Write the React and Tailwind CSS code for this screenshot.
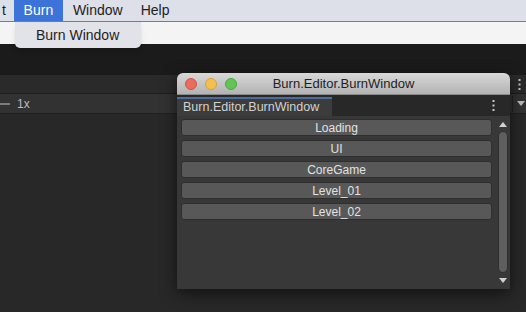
const Dots = ({ className = "" }) => (
  <svg width="3" height="11" viewBox="0 0 3 11" className={className}>
    <rect x="0.5" y="0" width="2" height="2" fill="currentColor" />
    <rect x="0.5" y="4.5" width="2" height="2" fill="currentColor" />
    <rect x="0.5" y="9" width="2" height="2" fill="currentColor" />
  </svg>
);

const scenes = ["Loading", "UI", "CoreGame", "Level_01", "Level_02"];

const App = () => {
  return (
    <div
      className="relative w-[526px] h-[312px] overflow-hidden flex flex-col bg-[#282828]"
      style={{ fontFamily: '"Liberation Sans", Arial, sans-serif' }}
    >
      {/* mac menu bar */}
      <div className="h-[22px] shrink-0 bg-[#dde0e9] border-b border-[#7a7d88] flex items-stretch text-[14px] text-[#1e1e1e]">
        <span className="pl-[2px] pr-[8px] flex items-center">t</span>
        <span className="w-[49px] bg-[#3b73d8] text-white flex items-center justify-center">Burn</span>
        <span className="pl-[10px] pr-[18px] flex items-center">Window</span>
        <span className="flex items-center">Help</span>
      </div>
      <div className="h-[22px] shrink-0 bg-[#f4f4f4]" />
      <div className="h-[31px] shrink-0 bg-[#1b1b1b]" />

      {/* unity panel behind */}
      <div className="h-[19px] shrink-0 bg-[#2a2a2a] border-b border-[#1d1d1d] flex items-center justify-end pr-[5px] text-[#c4c4c4]">
        <Dots />
      </div>
      <div className="h-[20px] shrink-0 bg-[#323232] border-b border-[#1f1f1f] flex items-center">
        <div className="w-[10px] h-[2px] bg-[#7c7c7c]" />
        <span className="ml-[7px] text-[12px] text-[#bdbdbd]">1x</span>
        <div className="ml-auto w-px h-[16px] bg-[#222]" />
        <svg width="8" height="5" viewBox="0 0 8 5" className="ml-[4px] mr-[1px] text-[#bbbbbb]">
          <path d="M0 0h8L4 5z" fill="currentColor" />
        </svg>
      </div>
      <div className="flex-1 bg-[#282828]" />

      {/* Burn menu dropdown */}
      <div className="absolute left-[15px] top-[22px] w-[126px] h-[26px] bg-[#e2e3e9] rounded-b-[5px] shadow-md flex items-center pl-[21px] text-[14px] text-[#1e1e1e]">
        Burn Window
      </div>

      {/* floating editor window */}
      <div className="absolute left-[177px] top-[73px] w-[333px] h-[216px] flex flex-col rounded-t-[6px] overflow-hidden shadow-[0_4px_16px_rgba(0,0,0,0.6)]">
        <div className="h-[22px] shrink-0 relative flex items-center bg-gradient-to-b from-[#d8d8d8] to-[#b3b3b3] border-b border-[#8a8a8a]">
          <div className="flex gap-[8px] pl-[8px]">
            <span className="w-[12px] h-[12px] rounded-full bg-[#ed6a5e] border border-[#d05446]" />
            <span className="w-[12px] h-[12px] rounded-full bg-[#f5bf4f] border border-[#d6a13a]" />
            <span className="w-[12px] h-[12px] rounded-full bg-[#61c554] border border-[#4ea643]" />
          </div>
          <span className="flex-1 text-center pr-[88px] pl-[28px] text-[13px] text-[#1f1f1f]">Burn.Editor.BurnWindow</span>
        </div>

        <div className="h-[21px] shrink-0 bg-[#282828] flex items-end">
          <div className="w-[155px] h-[19px] bg-[#3c3c3c] border-t-2 border-[#4b6c9c] flex items-center pl-[6px] text-[12.5px] text-[#d2d2d2]">
            Burn.Editor.BurnWindow
          </div>
          <div className="ml-auto self-center mr-[15px] text-[#c8c8c8]">
            <Dots />
          </div>
        </div>

        <div className="flex-1 bg-[#383838] flex pl-[4px] pt-[3px] pr-[1px] pb-[1px]">
          <div className="flex-1 flex flex-col gap-[4px]">
            {scenes.map((s) => (
              <div
                key={s}
                className="h-[17px] bg-[#585858] border border-[#2e2e2e] rounded-[3px] flex items-center justify-center text-[12px] text-[#e2e2e2]"
              >
                {s}
              </div>
            ))}
          </div>
          <div className="w-[12px] ml-[5px] flex flex-col items-center -mt-[2px] py-[3px]">
            <svg width="8" height="5" viewBox="0 0 8 5" className="mt-[2px] text-[#d0d0d0]">
              <path d="M0 5h8L4 0z" fill="currentColor" />
            </svg>
            <div className="w-[10px] flex-1 mt-[4px] mb-[5px] rounded-full bg-[#5e5e5e] border border-[#2f2f2f]" />
            <svg width="8" height="5" viewBox="0 0 8 5" className="mb-[2px] text-[#d0d0d0]">
              <path d="M0 0h8L4 5z" fill="currentColor" />
            </svg>
          </div>
        </div>
      </div>
    </div>
  );
};

export default App;
